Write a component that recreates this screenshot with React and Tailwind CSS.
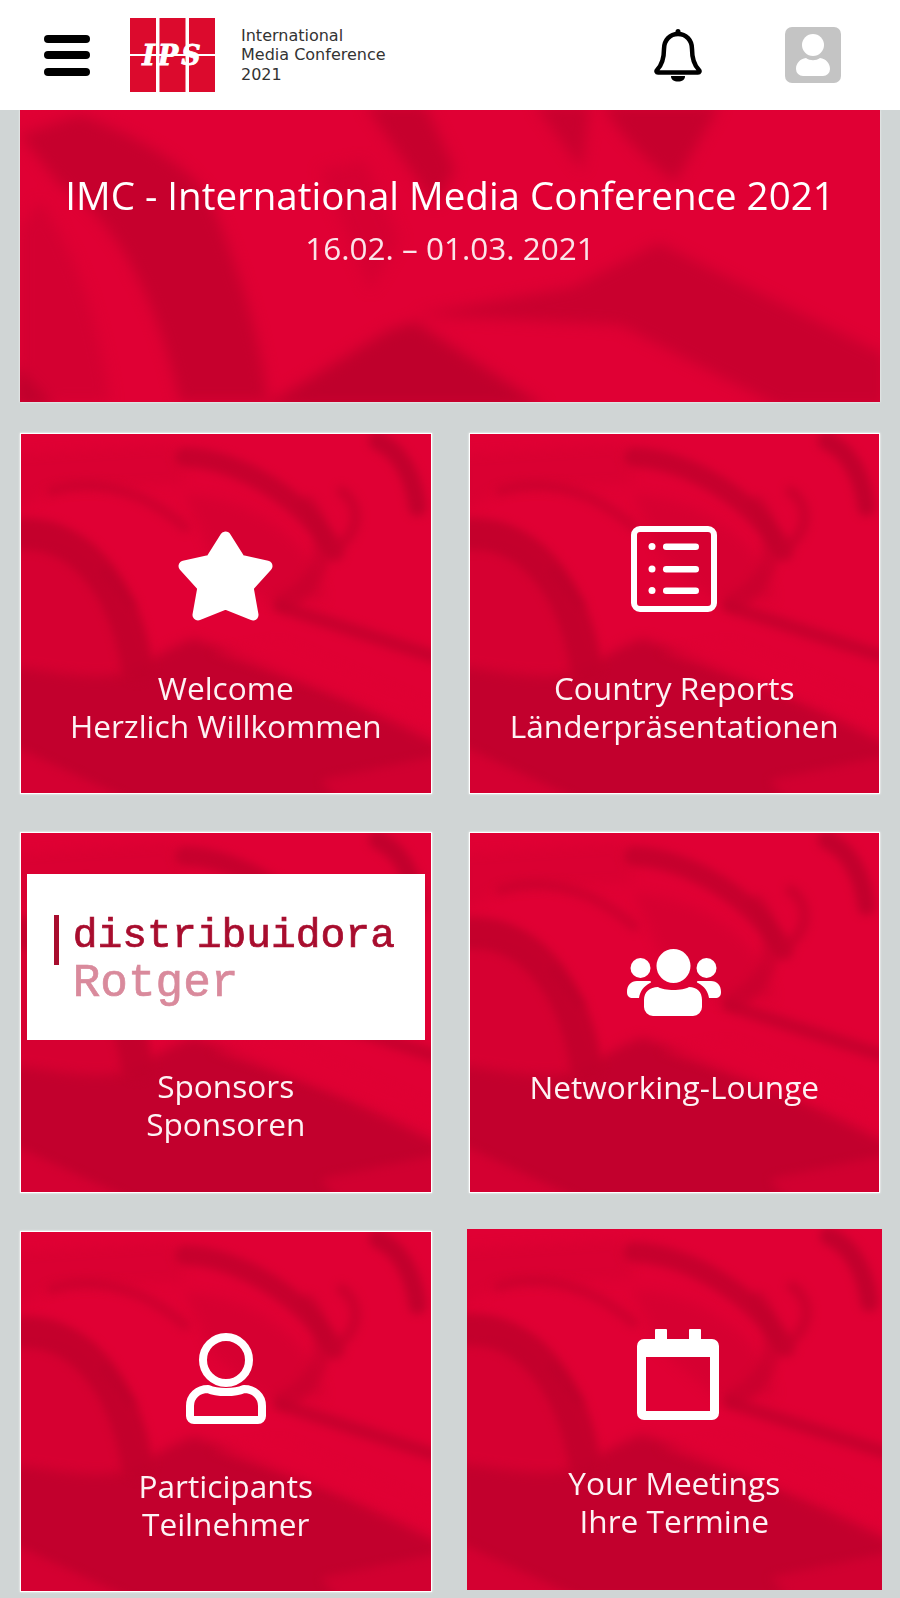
import React from "react";

const openSans = { fontFamily: '"Open Sans", sans-serif' };

// the blurred photo texture behind every tile
const Textura = () => (
  <svg viewBox="0 0 410 358" preserveAspectRatio="none" className="absolute inset-0 h-full w-full">
    <g fill="#bf002c" className="blur-[6px]">
      <path d="M-10 232C40 238 90 250 116 232C135 222 150 212 173 204C250 230 340 270 420 310V370H-10Z" opacity="0.9" />
      <path d="M164 60C235 65 290 105 305 165L250 170L190 120Z" opacity="0.28" />
      <path d="M-10 20L150 10L165 50L30 55L-10 80Z" fill="#d40030" opacity="0.5" />
      <path d="M-10 105C50 85 105 135 125 232L100 245L-10 235Z" opacity="0.28" />
    </g>
    <g fill="#e00034" className="blur-[5px]">
      <path d="M-10 310L120 370H-10Z" opacity="0.6" />
      <path d="M300 345L420 320V370H320Z" opacity="0.5" />
      <path d="M190 218L260 205L420 275V292Z" opacity="0.45" />
    </g>
    <g fill="none" stroke="#bf002c" strokeLinecap="round" className="blur-[4px]">
      <path d="M31 57C65 45 115 50 164 93" strokeWidth="10" opacity="0.55" />
      <path d="M164 23C215 25 280 60 314 117" strokeWidth="20" opacity="0.8" />
      <path d="M321 57C338 70 340 90 324 107" strokeWidth="11" opacity="0.6" />
      <path d="M357 7C375 15 392 35 397 73" strokeWidth="18" opacity="0.9" />
      <path d="M-5 100C50 95 100 140 116 230" strokeWidth="32" opacity="0.85" />
      <path d="M84 137L111 170" strokeWidth="10" />
      <path d="M287 70C315 110 300 150 262 168" strokeWidth="18" opacity="0.5" />
      <path d="M259 172L414 222" strokeWidth="13" opacity="0.75" />
    </g>
  </svg>
);

const TexturaBanner = () => (
  <svg viewBox="0 0 860 292" preserveAspectRatio="none" className="absolute inset-0 h-full w-full">
    <g fill="#bf002c" className="blur-[7px]">
      <path d="M0 25L60 5C115 25 170 55 190 90C215 150 240 220 248 292H160C140 200 100 110 40 75Z" opacity="0.8" />
      <path d="M20 90C60 150 80 220 90 292H0L0 120Z" fill="#cf0030" opacity="0.7" />
      <path d="M345 -5H405L435 60L415 95Z" opacity="0.8" />
      <path d="M515 -5H570L562 60Z" opacity="0.7" />
      <path d="M582 -5H700L655 72C625 50 600 25 582 -5Z" opacity="0.8" />
      <path d="M243 297L369 220L395 212L525 297Z" />
      <path d="M395 205L553 177L639 133L865 245V297H760L600 215Z" opacity="0.7" />
      <path d="M300 60L345 50L380 130L350 180Z" fill="#cf0030" opacity="0.6" />
      <path d="M-5 255L35 297H-5Z" />
    </g>
  </svg>
);

const Estrella = () => (
  <svg width="97" height="92" viewBox="0 0 97 92">
    <path
      d="M48.500 7L63 30L90 36L71 57L76 85L48.500 74L21 85L26 57L7 36L34 30Z"
      fill="#fff"
      stroke="#fff"
      strokeWidth="11"
      strokeLinejoin="round"
    />
  </svg>
);

const Lista = () => (
  <svg width="88" height="88" viewBox="0 0 88 88" fill="#fff">
    <rect x="4" y="4" width="80" height="80" rx="6" fill="none" stroke="#fff" strokeWidth="6" />
    <circle cx="22" cy="21.500" r="3.500" />
    <circle cx="22" cy="44" r="3.500" />
    <circle cx="22" cy="65.500" r="3.500" />
    <rect x="33" y="18.500" width="36" height="6.500" rx="3.200" />
    <rect x="33" y="41" width="36" height="6.500" rx="3.200" />
    <rect x="33" y="62.500" width="36" height="6.500" rx="3.200" />
  </svg>
);

const Grupo = () => (
  <svg width="96" height="70" viewBox="0 0 96 70" fill="#fff">
    <circle cx="47.500" cy="18" r="17" />
    <circle cx="14.500" cy="20" r="10" />
    <circle cx="80.500" cy="20" r="10" />
    <path d="M27 68a9 9 0 0 1-9-9V52C18 44 24 39 32 39C38 43 57 43 63 39C71 39 76 44 76 52V59a9 9 0 0 1-9 9Z" />
    <path d="M1 44C1 37 5 33 11 33H23C25 33 26 34 24 35C18 38 14 43 13 50H7C3 50 1 48 1 44Z" />
    <path d="M95 44C95 37 91 33 85 33H73C71 33 70 34 72 35C78 38 82 43 83 50H89C93 50 95 48 95 44Z" />
  </svg>
);

const Persona = () => (
  <svg width="82" height="92" viewBox="0 0 82 92" fill="none" stroke="#fff" strokeWidth="8">
    <circle cx="41" cy="28" r="23" />
    <path d="M5 84V74C5 64 13 57 23 57C32 61 50 61 59 57C69 57 77 64 77 74V84a4 4 0 0 1-4 4H9a4 4 0 0 1-4-4Z" strokeLinejoin="round" />
  </svg>
);

const Calendario = () => (
  <svg className="ml-[7px]" width="82" height="92" viewBox="0 0 82 92" fill="#fff">
    <rect x="18" y="0" width="12" height="14" rx="1" />
    <rect x="52" y="0" width="12" height="14" rx="1" />
    <path
      fillRule="evenodd"
      d="M7 10H75a7 7 0 0 1 7 7V84a7 7 0 0 1-7 7H7a7 7 0 0 1-7-7V17a7 7 0 0 1 7-7ZM9 28V82H73V28Z"
    />
  </svg>
);

const Tile = ({ icono, lineas, desp, className = "border border-white shadow-[0_0_2px_#ffffff]" }) => (
  <div className={`relative h-[361px] overflow-hidden bg-[#e00034] ${className}`}>
    <Textura />
    <div className="relative flex h-full flex-col items-center pt-[91px]">
      <div className={`flex h-[96px] items-start justify-center ${desp}`}>{icono}</div>
      <div className="mt-[48px] text-center text-[31.600px] leading-[38px] text-[#fdf2f4]" style={openSans}>
        {lineas.map((l) => (
          <p key={l}>{l}</p>
        ))}
      </div>
    </div>
  </div>
);

const TileSponsor = () => (
  <div className="relative h-[361px] overflow-hidden border border-white bg-[#e00034] shadow-[0_0_2px_#ffffff]">
    <Textura />
    <div className="relative flex h-full flex-col items-center pt-[41px]">
      <div className="flex h-[166px] w-[398px] items-start bg-white pl-[27px] pt-[38px]">
        <div className="mr-[14px] mt-[3px] h-[50px] w-[5px] bg-[#a80d2e]" />
        <div style={{ fontFamily: '"Liberation Mono", monospace' }}>
          <p className="text-[41.300px] leading-[48px] text-[#a80d2e] [-webkit-text-stroke:0.7px_#a80d2e]">distribuidora</p>
          <p className="text-[46px] leading-[48px] text-[#d98a9c] [-webkit-text-stroke:0.7px_#d98a9c]">Rotger</p>
        </div>
      </div>
      <div className="mt-[27px] text-center text-[31.600px] leading-[38px] text-[#fdf2f4]" style={openSans}>
        <p>Sponsors</p>
        <p>Sponsoren</p>
      </div>
    </div>
  </div>
);

export default function App() {
  return (
    <div className="h-[1598px] w-[900px] overflow-hidden bg-[#d0d5d5]">
      <header className="flex h-[110px] items-center bg-white">
        <div className="ml-[44px] flex w-[46px] flex-col gap-[8.500px]">
          <div className="h-[8px] rounded-full bg-black" />
          <div className="h-[8px] rounded-full bg-black" />
          <div className="h-[8px] rounded-full bg-black" />
        </div>
        <svg className="ml-[40px]" width="85" height="74" viewBox="0 0 85 74">
          <rect x="0" y="0" width="26" height="74" fill="#dc0a2d" />
          <rect x="29.500" y="0" width="26" height="74" fill="#dc0a2d" />
          <rect x="59" y="0" width="26" height="74" fill="#dc0a2d" />
          <rect x="0" y="36" width="85" height="2" fill="#fff" />
          <text
            x="43"
            y="47"
            textAnchor="middle"
            fill="#fff"
            stroke="#fff"
            strokeWidth="0.800"
            fontSize="27"
            letterSpacing="3"
            fontStyle="italic"
            fontWeight="700"
            fontFamily='"DejaVu Serif", serif'
          >
            IPS
          </text>
        </svg>
        <div
          className="ml-[26px] text-[16px] leading-[19.500px] text-[#333333]"
          style={{ fontFamily: '"DejaVu Sans", sans-serif' }}
        >
          <p>International</p>
          <p>Media Conference</p>
          <p>2021</p>
        </div>
        <svg className="ml-[268px]" width="48" height="54" viewBox="0 0 48 54" fill="none" stroke="#000" strokeWidth="4.500">
          <circle cx="24" cy="3.500" r="2.500" fill="#000" stroke="none" />
          <path
            d="M3 42C8 37 10 31 10 21C10 12 16 6 24 6C32 6 38 12 38 21C38 31 40 37 45 42C46 43 45.500 44.500 44 44.500H4C2.500 44.500 2 43 3 42Z"
            strokeLinejoin="round"
          />
          <path d="M17 48H31C31 52 28 53.500 24 53.500C20 53.500 17 52 17 48Z" fill="#000" stroke="none" />
        </svg>
        <div className="ml-[83px] flex h-[56px] w-[56px] items-center justify-center rounded-[7px] bg-[#c4c4c4]">
          <svg width="36" height="50" viewBox="0 0 36 50" fill="#fff">
            <circle cx="18" cy="15" r="11" />
            <path d="M8 46a7 7 0 0 1-7-7C1 33 5 29 11 28C15 31 21 31 25 28C31 29 35 33 35 39a7 7 0 0 1-7 7Z" />
          </svg>
        </div>
      </header>

      <main className="px-[20px]">
        <section className="relative h-[292px] overflow-hidden bg-[#e00034] shadow-[0_0_2px_#ffffff]">
          <TexturaBanner />
          <div className="relative pt-[60px] text-center text-white" style={openSans}>
            <h1 className="text-[38.500px] leading-[50px]">IMC - International Media Conference 2021</h1>
            <p className="mt-[7px] text-[31.500px] leading-[42px] text-[#fbe3e8]">16.02. – 01.03. 2021</p>
          </div>
        </section>

        <div className="mt-[31px] grid grid-cols-2 gap-x-[37px] gap-y-[38px]">
          <Tile icono={<Estrella />} desp="pt-[5px]" lineas={["Welcome", "Herzlich Willkommen"]} />
          <Tile icono={<Lista />} desp="pt-[0px]" lineas={["Country Reports", "Länderpräsentationen"]} />
          <TileSponsor />
          <Tile icono={<Grupo />} desp="pt-[24px]" lineas={["Networking-Lounge"]} />
          <Tile icono={<Persona />} desp="pt-[9px]" lineas={["Participants", "Teilnehmer"]} />
          <Tile
            icono={<Calendario />}
            desp="pt-[9px]"
            lineas={["Your Meetings", "Ihre Termine"]}
            className="-mx-[2px] -mt-[2px]"
          />
        </div>
      </main>
    </div>
  );
}
